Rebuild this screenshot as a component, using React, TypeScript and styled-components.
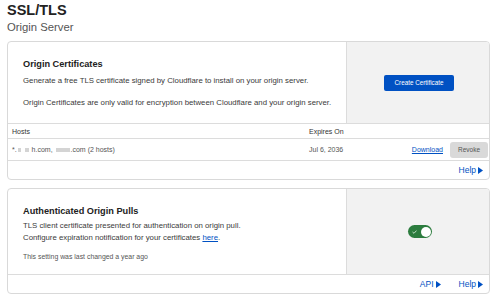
import React from "react";
import styled, { createGlobalStyle } from "styled-components";

const Global = createGlobalStyle`
  body {
    margin: 0;
    background: #fff;
    font-family: "Liberation Sans", Arial, sans-serif;
    color: #313131;
  }
`;

const Page = styled.div`
  width: 497px;
  padding: 2px 7px 0;
  box-sizing: border-box;
`;

const Title = styled.h1`
  margin: 0;
  font-size: 14.5px;
  font-weight: 700;
  line-height: 17px;
  color: #222;
`;

const Subtitle = styled.div`
  font-size: 11.3px;
  line-height: 16px;
  color: #555;
  margin-bottom: 6px;
`;

const Card = styled.section`
  border: 1px solid #d9d9d9;
  border-radius: 4px;
  background: #fff;
  margin-bottom: 8px;
  overflow: hidden;
`;

const CardTop = styled.div<{ $height: number }>`
  display: grid;
  grid-template-columns: 1fr 143px;
  height: ${(p) => p.$height}px;
  border-bottom: 1px solid #dcdcdc;
`;

const CardBody = styled.div`
  padding: 16px 5px 0 15px;
`;

const CardTitle = styled.h2<{ $gap: number }>`
  margin: 0 0 ${(p) => p.$gap}px;
  font-size: 9.2px;
  line-height: 12px;
  font-weight: 700;
  color: #222;
`;

const Text = styled.p<{ $gap?: number }>`
  margin: 0 0 ${(p) => p.$gap ?? 0}px;
  font-size: 7.8px;
  line-height: 12px;
  color: #3a3a3a;
`;

const Note = styled.p`
  margin: 8px 0 0;
  font-size: 6.9px;
  line-height: 9px;
  color: #555;
`;

const Side = styled.div`
  background: #f2f2f2;
  border-left: 1px solid #dcdcdc;
  display: flex;
  align-items: center;
  justify-content: center;
`;

const PrimaryButton = styled.button`
  background: #0051c3;
  color: #fff;
  border: none;
  border-radius: 2px;
  height: 16px;
  width: 70px;
  padding: 0;
  font-family: inherit;
  font-size: 6.3px;
  margin-left: 2px;
`;

const Table = styled.div`
  font-size: 7px;
  color: #3a3a3a;
`;

const Row = styled.div<{ $height: number; $head?: boolean }>`
  display: grid;
  grid-template-columns: 297px 98px 1fr;
  align-items: center;
  height: ${(p) => p.$height}px;
  padding-left: 4px;
  border-bottom: 1px solid #dcdcdc;
  color: ${(p) => (p.$head ? "#333" : "#555")};
`;

const Actions = styled.div`
  display: flex;
  align-items: center;
  justify-content: flex-end;
  gap: 7px;
  padding-right: 1px;
`;

const TextLink = styled.a`
  color: #0051c3;
  text-decoration: underline;
  font-size: 7px;
`;

const GreyButton = styled.button`
  background: #d9d9d9;
  color: #555;
  border: none;
  border-radius: 3px;
  height: 16px;
  width: 38px;
  padding: 0;
  font-family: inherit;
  font-size: 6.5px;
`;

const Redact = styled.span<{ $w: number }>`
  display: inline-block;
  width: ${(p) => p.$w}px;
  height: 4px;
  background: #d4d4d4;
  margin: 0 1px;
  vertical-align: middle;
`;

const Footer = styled.div`
  height: 18px;
  display: flex;
  align-items: center;
  justify-content: flex-end;
  gap: 18px;
  padding-right: 6px;
`;

const FooterLink = styled.a`
  color: #0051c3;
  font-size: 8.5px;
  display: inline-flex;
  align-items: center;
  gap: 2px;
  text-decoration: none;
`;

const Caret = () => (
  <svg width="5" height="7" viewBox="0 0 5 7">
    <path d="M0 0 L5 3.5 L0 7 Z" fill="#0051c3" />
  </svg>
);

const Switch = styled.div`
  width: 24px;
  height: 13px;
  border-radius: 7px;
  background: #2c7c3e;
  position: relative;
  margin-left: 4px;
`;

const Knob = styled.span`
  position: absolute;
  right: 1.5px;
  top: 1.5px;
  width: 10px;
  height: 10px;
  border-radius: 50%;
  background: #fff;
`;

const Check = styled.svg`
  position: absolute;
  left: 4px;
  top: 4.5px;
`;

const Link = styled.a`
  color: #0051c3;
  text-decoration: underline;
`;

export default function App() {
  return (
    <>
      <Global />
      <Page>
        <Title>SSL/TLS</Title>
        <Subtitle>Origin Server</Subtitle>

        <Card>
          <CardTop $height={81}>
            <CardBody>
              <CardTitle $gap={5}>Origin Certificates</CardTitle>
              <Text $gap={10}>
                Generate a free TLS certificate signed by Cloudflare to install on your origin server.
              </Text>
              <Text>
                Origin Certificates are only valid for encryption between Cloudflare and your origin server.
              </Text>
            </CardBody>
            <Side>
              <PrimaryButton>Create Certificate</PrimaryButton>
            </Side>
          </CardTop>
          <Table>
            <Row $height={14} $head>
              <span>Hosts</span>
              <span>Expires On</span>
              <span />
            </Row>
            <Row $height={21}>
              <span>
                *.<Redact $w={3} /> <Redact $w={4} /> h.com, <Redact $w={14} />.com (2 hosts)
              </span>
              <span>Jul 6, 2036</span>
              <Actions>
                <TextLink>Download</TextLink>
                <GreyButton>Revoke</GreyButton>
              </Actions>
            </Row>
          </Table>
          <Footer>
            <FooterLink>
              Help <Caret />
            </FooterLink>
          </Footer>
        </Card>

        <Card>
          <CardTop $height={85}>
            <CardBody>
              <CardTitle $gap={3}>Authenticated Origin Pulls</CardTitle>
              <Text>TLS client certificate presented for authentication on origin pull.</Text>
              <Text>
                Configure expiration notification for your certificates <Link>here</Link>.
              </Text>
              <Note>This setting was last changed a year ago</Note>
            </CardBody>
            <Side>
              <Switch>
                <Check width="5" height="4" viewBox="0 0 5 4">
                  <path d="M0.5 2 L2 3.3 L4.5 0.6" stroke="#cfe8d4" strokeWidth="0.9" fill="none" />
                </Check>
                <Knob />
              </Switch>
            </Side>
          </CardTop>
          <Footer>
            <FooterLink>
              API <Caret />
            </FooterLink>
            <FooterLink>
              Help <Caret />
            </FooterLink>
          </Footer>
        </Card>
      </Page>
    </>
  );
}
